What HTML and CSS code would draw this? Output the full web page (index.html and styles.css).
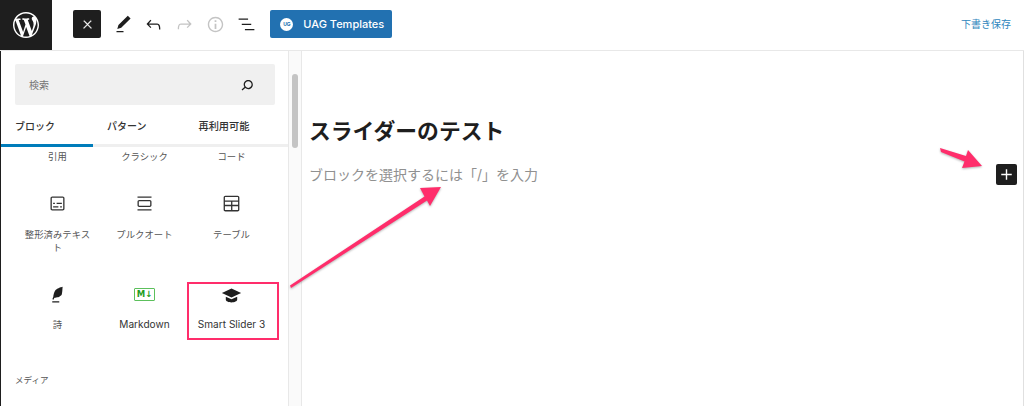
FILE: index.html
```html
<!DOCTYPE html>
<html lang="ja">
<head>
  <meta charset="UTF-8" />
  <title>スライダーのテスト</title>
  <link rel="stylesheet" href="styles.css">
</head>
<body>
  <div class="app">
    <!-- Top toolbar -->
    <header class="topbar">
      <div class="logo">
        <svg width="26" height="26" viewBox="0 0 20 20"><path fill="#fff" d="M20 10c0-5.51-4.49-10-10-10C4.48 0 0 4.49 0 10c0 5.52 4.48 10 10 10 5.51 0 10-4.48 10-10zM7.78 15.37L4.37 6.22c.55-.02 1.17-.08 1.17-.08.5-.06.44-1.13-.06-1.11 0 0-1.45.11-2.37.11-.18 0-.37 0-.58-.01C4.12 2.69 6.87 1.11 10 1.11c2.33 0 4.45.87 6.05 2.34-.68-.11-1.65.39-1.65 1.58 0 .74.45 1.36.9 2.1.35.61.55 1.36.55 2.46 0 1.49-1.4 5-1.4 5l-3.03-8.37c.54-.02.82-.17.82-.17.5-.05.44-1.25-.06-1.22 0 0-1.44.12-2.38.12-.87 0-2.33-.12-2.33-.12-.5-.03-.56 1.2-.06 1.22l.92.08 1.26 3.41zM17.41 10c.24-.64.74-1.87.43-4.25.7 1.29 1.05 2.71 1.05 4.25 0 3.29-1.73 6.24-4.4 7.78.97-2.59 1.94-5.2 2.92-7.78zM6.1 18.09C3.12 16.65 1.11 13.53 1.11 10c0-1.3.23-2.48.72-3.59C3.25 10.3 4.67 14.2 6.1 18.09zm4.03-6.63l2.58 6.98c-.86.29-1.76.45-2.71.45-.79 0-1.57-.11-2.29-.33.81-2.38 1.62-4.74 2.42-7.1z"/></svg>
      </div>
      <div class="tools">
        <button class="close-btn">
          <svg width="13" height="13" viewBox="0 0 24 24"><path fill="#fff" stroke="#fff" stroke-width="0.8" d="M13 11.8l6.1-6.3-1-1-6.1 6.2-6.1-6.2-1 1 6.1 6.3-6.5 6.7 1 1 6.5-6.6 6.5 6.6 1-1z"/></svg>
        </button>
        <svg class="tool" viewBox="0 0 24 24"><path d="M20.1 5.1L16.9 2 6.2 12.7l-1.3 4.4 4.5-1.3L20.1 5.1zM4 20.8h8v-1.5H4v1.5z"/></svg>
        <svg class="tool" viewBox="0 0 24 24"><path d="M18.3 11.7c-.6-.6-1.4-.9-2.3-.9H6.7l2.9-3.3-1.1-1-4.5 5L8.5 16l1-1-2.7-2.7H16c.5 0 .9.2 1.3.5 1 1 1 3.4 1 4.5v.3h1.5v-.2c0-1.5 0-4.3-1.5-5.7z"/></svg>
        <svg class="tool disabled" viewBox="0 0 24 24"><path d="M15.6 6.5l-1.1 1 2.9 3.3H8c-.9 0-1.7.3-2.3.9-1.4 1.5-1.4 4.2-1.4 5.6v.2h1.5v-.3c0-1.1 0-3.5 1-4.5.3-.3.7-.5 1.3-.5h9.2L14.5 15l1.1 1.1 4.6-4.6-4.6-5z"/></svg>
        <svg class="tool disabled" viewBox="0 0 24 24"><path d="M12 3.2c-4.8 0-8.8 3.9-8.8 8.8 0 4.8 3.9 8.8 8.8 8.8 4.8 0 8.8-3.9 8.8-8.8 0-4.8-4-8.8-8.8-8.8zm0 16c-4 0-7.2-3.3-7.2-7.2C4.8 8 8 4.8 12 4.8s7.2 3.3 7.2 7.2c0 4-3.2 7.2-7.2 7.2zM11 17h2v-6h-2v6zm0-8h2V7h-2v2z"/></svg>
        <svg class="tool" viewBox="0 0 24 24"><path d="M13.8 5.2H3v1.5h10.8V5.2zm-3.600 12v1.500H21v-1.500H10.200zm7.200-6H6.600v1.500h10.800v-1.500z"/></svg>
        <button class="uag-btn"><span class="uag-badge">UG</span>UAG Templates</button>
      </div>
      <a class="save-link">下書き保存</a>
    </header>

    <div class="main">
      <!-- Block inserter -->
      <aside class="inserter">
        <div class="search">
          <span>検索</span>
          <svg width="20" height="20" viewBox="0 0 24 24"><path fill="#1e1e1e" d="M13.5 6C10.5 6 8 8.5 8 11.5c0 1.1.3 2.1.9 3l-3.4 3 1 1.1 3.4-2.9c1 .9 2.2 1.4 3.6 1.4 3 0 5.5-2.5 5.5-5.5C19 8.5 16.5 6 13.5 6zm0 9.5c-2.2 0-4-1.8-4-4s1.8-4 4-4 4 1.8 4 4-1.8 4-4 4z"/></svg>
        </div>
        <nav class="tabs">
          <div class="tab active">ブロック</div>
          <div class="tab">パターン</div>
          <div class="tab">再利用可能</div>
        </nav>
        <div class="blocks">
          <div class="block first"><span class="block-label">引用</span></div>
          <div class="block first"><span class="block-label">クラシック</span></div>
          <div class="block first"><span class="block-label">コード</span></div>

          <div class="block">
            <svg class="block-icon" viewBox="0 0 24 24"><path d="M18 4H6c-1.1 0-2 .9-2 2v12c0 1.1.9 2 2 2h12c1.1 0 2-.9 2-2V6c0-1.1-.9-2-2-2zm.5 14c0 .3-.2.5-.5.5H6c-.3 0-.5-.2-.5-.5V6c0-.3.2-.5.5-.5h12c.3 0 .5.2.5.5v12zM7 16.5h6V15H7v1.5zm4-4h6V11h-6v1.5zM9 11H7v1.5h2V11zm6 5.5h2V15h-2v1.5z"/></svg>
            <span class="block-label">整形済みテキスト</span>
          </div>
          <div class="block">
            <svg class="block-icon" viewBox="0 0 24 24"><path d="M18 8H6c-1.1 0-2 .9-2 2v4c0 1.1.9 2 2 2h12c1.1 0 2-.9 2-2v-4c0-1.1-.9-2-2-2zm.5 6c0 .3-.2.5-.5.5H6c-.3 0-.5-.2-.5-.5v-4c0-.3.2-.5.5-.5h12c.3 0 .5.2.5.5v4zM4 4v1.5h16V4H4zm0 16h16v-1.5H4V20z"/></svg>
            <span class="block-label">プルクオート</span>
          </div>
          <div class="block">
            <svg class="block-icon" viewBox="0 0 24 24"><path d="M19 3H5c-1.1 0-2 .9-2 2v14c0 1.1.9 2 2 2h14c1.1 0 2-.9 2-2V5c0-1.1-.9-2-2-2zM5 4.500h14c.3 0 .5.2.5.5v3.500h-15V5c0-.3.2-.5.5-.5zm8 5.500h6.500v3.500H13V10zm-1.500 3.500h-7V10h7v3.500zm-7 5.500v-4h7v4.500H5c-.3 0-.5-.2-.5-.5zm14.500.5h-6V15h6.500v4c0 .3-.2.5-.5.5z"/></svg>
            <span class="block-label">テーブル</span>
          </div>

          <div class="block">
            <svg class="block-icon low" viewBox="0 0 24 24"><path d="M17.800 2l-.9.3c-.1 0-3.600 1-5.200 2.100C10 5.500 9.300 6.500 8.900 7.100c-.6.900-1.700 4.700-1.700 6.300l-.9 2.300c-.2.400 0 .8.400 1 .1 0 .2.1.3.1.3 0 .6-.2.7-.5l.6-1.500c.3 0 .7-.1 1.200-.2.7-.1 1.400-.3 2.200-.5.800-.2 1.600-.5 2.400-.8.700-.3 1.400-.7 1.900-1.200s.8-1.200 1-1.900c.2-.7.3-1.600.4-2.400.1-.8.1-1.700.2-2.500 0-.8.1-1.500.2-2.100V2zM6 20h8v-1.500H6V20z"/></svg>
            <span class="block-label">詩</span>
          </div>
          <div class="block">
            <span class="md-icon">M↓</span>
            <span class="block-label latin">Markdown</span>
          </div>
          <div class="block highlight">
            <svg class="block-icon low" viewBox="0 0 24 24"><path d="M12 4L1 9.200l11 5.200 11-5.200zM5.500 13.300v3.600c0 1.700 3 3 6.500 3s6.500-1.300 6.500-3v-3.600L12 16.400z"/></svg>
            <span class="block-label latin">Smart Slider 3</span>
          </div>
        </div>
        <h3 class="category">メディア</h3>
      </aside>

      <div class="scroller"><div class="thumb"></div></div>

      <!-- Editor canvas -->
      <section class="editor">
        <h1 class="post-title">スライダーのテスト</h1>
        <p class="placeholder">ブロックを選択するには「/」を入力</p>
        <button class="add-btn">
          <svg width="21" height="21" viewBox="0 0 24 24"><path fill="#fff" d="M18 11.200h-5.200V6h-1.600v5.200H6v1.600h5.200V18h1.600v-5.200H18z"/></svg>
        </button>
      </section>
    </div>

    <!-- Annotation arrows drawn over the screenshot -->
    <svg class="arrows" width="1024" height="406" viewBox="0 0 1024 406">
      <path d="M290 285.500L424.500 196.500 420 188 441 187 430 206 427 200.500 291 288z"/>
      <path d="M940 148L966 156 968 150 982 166 962 168 964.500 161.500 941 152z"/>
    </svg>
  </div>
</body>
</html>
```

FILE: styles.css
```css
* {
  box-sizing: border-box;
}

body {
  margin: 0;
  background: white;
  font-family: Inter, "Noto Sans CJK JP", sans-serif;
  color: #1e1e1e;
  text-spacing-trim: space-all;
  overflow: hidden;
}

button {
  border: none;
  padding: 0;
  font-family: inherit;
  cursor: pointer;
}

.app {
  position: relative;
  width: 1024px;
  height: 406px;
  display: flex;
  flex-direction: column;
  overflow: hidden;
}

.topbar {
  height: 51px;
  display: flex;
  align-items: flex-start;
  border-bottom: 1px solid #e8e8e8;
}

.logo {
  width: 52px;
  height: 50px;
  background-color: #1e1e1e;
  display: flex;
  align-items: center;
  justify-content: center;
}

.tools {
  display: flex;
  align-items: center;
  margin: 10px 0 0 21px;
}

.close-btn {
  width: 28px;
  height: 28px;
  margin-right: 11.700px;
  background-color: #1e1e1e;
  border-radius: 2px;
  display: flex;
  align-items: center;
  justify-content: center;
}

.tool {
  width: 21px;
  height: 21px;
  margin-right: 9.800px;
  fill: #1e1e1e;
}

.tool.disabled {
  fill: #c4c4c4;
}

.uag-btn {
  width: 122px;
  height: 28px;
  margin-left: 3.700px;
  display: flex;
  align-items: center;
  padding-left: 10px;
  gap: 10px;
  background-color: #2271b1;
  color: white;
  font-size: 11px;
  font-weight: 500;
  border-radius: 2px;
}

.uag-badge {
  width: 13px;
  height: 13px;
  border-radius: 50%;
  background: white;
  color: #2271b1;
  font-size: 5px;
  font-weight: 700;
  line-height: 13px;
  text-align: center;
}

.save-link {
  margin: 18px 13px 0 auto;
  font-size: 10px;
  line-height: 12px;
  color: #2e86bd;
}

.main {
  flex: 1;
  display: flex;
  min-height: 0;
  border-left: 1px solid #1e1e1e;
}

.inserter {
  width: 288px;
  flex-shrink: 0;
  padding-top: 13px;
  border-right: 1px solid #e8e8e8;
}

.search {
  width: 260px;
  height: 41px;
  margin-left: 14px;
  padding: 0 18px 0 14px;
  display: flex;
  align-items: center;
  justify-content: space-between;
  background-color: #f0f0f0;
  border-radius: 2px;
  font-size: 10px;
  color: #757575;
}

.tabs {
  height: 42px;
  display: flex;
  border-bottom: 3px solid #efefef;
  font-size: 10px;
  font-weight: 500;
  color: #333;
}

.tab {
  height: 42px;
  line-height: 42px;
  padding: 0 14px;
}

.tab:last-child {
  padding-left: 38px;
  font-size: 10.200px;
}

.tab.active {
  padding-right: 38px;
  border-bottom: 3px solid #007cba;
}

.blocks {
  display: grid;
  grid-template-columns: repeat(3, 87px);
  grid-template-rows: 45px 90px 58px;
  padding-left: 13px;
}

.block {
  position: relative;
  display: flex;
  flex-direction: column;
  align-items: center;
  align-self: start;
  height: 58px;
  padding-top: 1px;
}

.block.first {
  height: 45px;
  padding-top: 3px;
}

.block-icon {
  width: 21px;
  height: 21px;
  margin-bottom: 14px;
  fill: #333;
  flex-shrink: 0;
}

.block-icon.low {
  margin-top: 2px;
  margin-bottom: 12px;
  fill: #1e1e1e;
}

.block-label {
  width: 70px;
  font-size: 9.400px;
  line-height: 13px;
  text-align: center;
  color: #555;
}

.block-label.latin {
  width: 80px;
  font-size: 10.100px;
  color: #333;
}

.md-icon {
  width: 21px;
  height: 13px;
  margin: 5px 0 17px;
  border: 1.500px solid #5cc05c;
  border-radius: 1px;
  color: #1f9d1f;
  font-family: "DejaVu Sans", sans-serif;
  font-size: 8.500px;
  font-weight: 700;
  line-height: 10px;
  text-align: center;
  white-space: nowrap;
  flex-shrink: 0;
}

.highlight::after {
  content: "";
  position: absolute;
  top: 0;
  bottom: 0;
  left: -1px;
  right: -4px;
  border: 2px solid #ff2d6b;
}

.category {
  margin: 34px 0 0 14px;
  font-size: 8.500px;
  line-height: 12px;
  font-weight: 400;
  color: #555;
}

.scroller {
  width: 13px;
  flex-shrink: 0;
  padding: 23px 3px 0 3px;
  background-color: #fafafa;
  border-right: 1px solid #e8e8e8;
}

.thumb {
  height: 74px;
  background-color: #c4c4c4;
  border-radius: 4px;
}

.editor {
  position: relative;
  flex: 1;
  padding: 66px 0 0 7px;
  border-right: 1px solid #e0e0e0;
}

.post-title {
  margin: 0;
  font-size: 21.800px;
  line-height: 28px;
  font-weight: 700;
}

.placeholder {
  margin: 20px 0 0;
  font-size: 14px;
  line-height: 20px;
  color: #909090;
}

/* floating inserter button, sits on top of the canvas */
.add-btn {
  position: absolute;
  top: 113px;
  right: 6px;
  width: 21px;
  height: 21px;
  background-color: #1e1e1e;
  border-radius: 2px;
  display: flex;
  align-items: center;
  justify-content: center;
}

.arrows {
  position: absolute;
  top: 0;
  left: 0;
  fill: #ff2d6b;
  filter: drop-shadow(0 1px 1px rgba(0,0,0,0.3));
  pointer-events: none;
}
```
